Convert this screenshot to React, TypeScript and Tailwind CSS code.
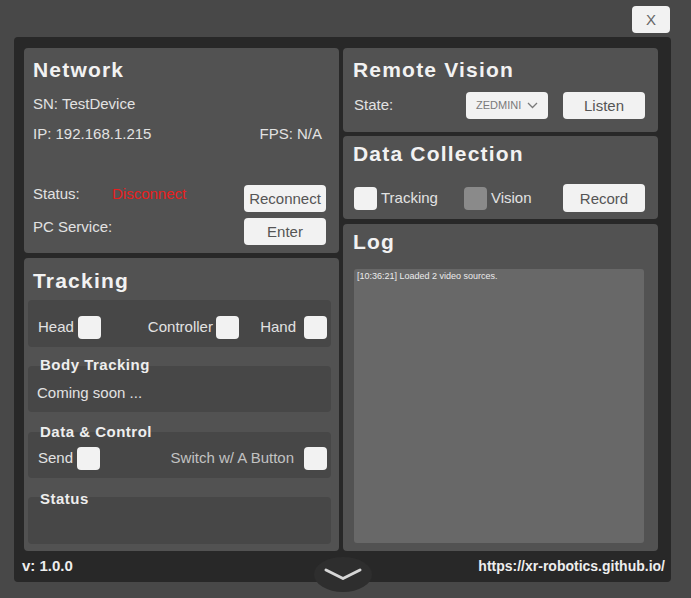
function Checkbox({ dim = false }: { dim?: boolean }) {
  return (
    <div
      className={
        "w-[23px] h-[23px] rounded-[4px] shrink-0 " +
        (dim ? "bg-[#8a8a8a]" : "bg-[#f2f2f2]")
      }
    />
  );
}

function Btn({ label, h = "h-[27px]" }: { label: string; h?: string }) {
  return (
    <button
      className={
        "w-[82px] rounded-[4px] bg-[#f2f2f2] text-[#555555] text-[15px] leading-none flex items-center justify-center shrink-0 " +
        h
      }
    >
      {label}
    </button>
  );
}

function Title({ text, cls = "" }: { text: string; cls?: string }) {
  return (
    <div
      className={
        "h-[28px] leading-[28px] text-[21px] font-bold tracking-[1.2px] text-[#f2f2f2] " +
        cls
      }
    >
      {text}
    </div>
  );
}

// section label that overlaps the top edge of the box below it
function SubLabel({ text, cls = "" }: { text: string; cls?: string }) {
  return (
    <div
      className={
        "relative z-[1] pl-[16px] leading-[16px] text-[15px] font-bold tracking-[0.5px] text-[#eeeeee] " +
        cls
      }
    >
      {text}
    </div>
  );
}

function NetworkPanel() {
  return (
    <div className="h-[205px] bg-[#525252] rounded-[4px] pl-[9px] pr-[13px] flex flex-col text-[15px] text-[#e2e2e2]">
      <Title text="Network" cls="mt-[8px]" />
      <div className="mt-[10px] leading-[20px]">SN: TestDevice</div>
      <div className="mt-[10px] leading-[20px] flex justify-between pr-[4px]">
        <span>IP: 192.168.1.215</span>
        <span>FPS: N/A</span>
      </div>
      <div className="mt-[41px] h-[27px] flex items-start">
        <span className="w-[79px] leading-[20px] -mt-[1px]">Status:</span>
        <span className="leading-[20px] -mt-[1px] text-[#e81e1e]">Disconnect</span>
        <div className="ml-auto">
          <Btn label="Reconnect" />
        </div>
      </div>
      <div className="mt-[6px] h-[27px] flex items-start">
        <span className="leading-[20px] -mt-[1px]">PC Service:</span>
        <div className="ml-auto">
          <Btn label="Enter" />
        </div>
      </div>
    </div>
  );
}

function TrackingPanel() {
  return (
    <div className="h-[293px] bg-[#525252] rounded-[4px] flex flex-col text-[15px] text-[#e2e2e2]">
      <Title text="Tracking" cls="mt-[9px] pl-[9px]" />
      <div className="mt-[5px] ml-[4px] mr-[8px] h-[47px] bg-[#474747] rounded-[4px] pt-[16px] pl-[10px] pr-[4px]">
        <div className="h-[23px] flex items-center">
          <span>Head</span>
          <div className="ml-[4px]">
            <Checkbox />
          </div>
          <span className="ml-[47px]">Controller</span>
          <div className="ml-[3px]">
            <Checkbox />
          </div>
          <span className="ml-auto">Hand</span>
          <div className="ml-[8px]">
            <Checkbox />
          </div>
        </div>
      </div>

      <SubLabel text="Body Tracking" cls="mt-[10px]" />
      <div className="-mt-[7px] ml-[4px] mr-[8px] h-[46px] bg-[#474747] rounded-[4px] pt-[17px] pl-[9px]">
        <div className="leading-[20px]">Coming soon ...</div>
      </div>

      <SubLabel text="Data & Control" cls="mt-[12px]" />
      <div className="-mt-[8px] ml-[4px] mr-[8px] h-[46px] bg-[#474747] rounded-[4px] pt-[15px] pl-[10px] pr-[4px]">
        <div className="h-[23px] flex items-center">
          <span>Send</span>
          <div className="ml-[4px]">
            <Checkbox />
          </div>
          <span className="ml-auto text-[#c2c2c2]">Switch w/ A Button</span>
          <div className="ml-[10px]">
            <Checkbox />
          </div>
        </div>
      </div>

      <SubLabel text="Status" cls="mt-[13px]" />
      <div className="-mt-[10px] ml-[4px] mr-[8px] h-[47px] bg-[#474747] rounded-[4px]" />
    </div>
  );
}

function RemoteVisionPanel() {
  return (
    <div className="h-[84px] bg-[#525252] rounded-[4px] pl-[10px] pr-[13px] flex flex-col text-[15px] text-[#e2e2e2]">
      <Title text="Remote Vision" cls="mt-[8px]" />
      <div className="mt-[8px] h-[27px] flex items-center">
        <span className="w-[113px] pl-[1px]">State:</span>
        <div className="w-[82px] h-[27px] rounded-[4px] bg-[#f2f2f2] flex items-center pl-[10px] gap-[6px]">
          <span className="text-[11px] text-[#7a7a7a] leading-none">ZEDMINI</span>
          <svg width="11" height="7" viewBox="0 0 11 7" fill="none">
            <polyline points="1,1 5.5,5.5 10,1" stroke="#7a7a7a" strokeWidth="1.3" />
          </svg>
        </div>
        <div className="ml-auto">
          <Btn label="Listen" />
        </div>
      </div>
    </div>
  );
}

function DataCollectionPanel() {
  return (
    <div className="h-[83px] bg-[#525252] rounded-[4px] pl-[10px] pr-[13px] flex flex-col text-[15px] text-[#e2e2e2]">
      <Title text="Data Collection" cls="mt-[4px]" />
      <div className="mt-[16px] h-[28px] flex items-center pl-[1px]">
        <Checkbox />
        <span className="ml-[4px]">Tracking</span>
        <div className="ml-[26px]">
          <Checkbox dim />
        </div>
        <span className="ml-[4px]">Vision</span>
        <div className="ml-auto">
          <Btn label="Record" h="h-[28px]" />
        </div>
      </div>
    </div>
  );
}

function LogPanel() {
  return (
    <div className="h-[327px] bg-[#525252] rounded-[4px] flex flex-col">
      <Title text="Log" cls="mt-[4px] pl-[10px]" />
      <div className="mt-[13px] ml-[11px] mr-[14px] h-[274px] bg-[#686868] rounded-[3px] pl-[3px] pt-[1px]">
        <div className="text-[9px] leading-[12px] text-[#ececec]">
          [10:36:21] Loaded 2 video sources.
        </div>
      </div>
    </div>
  );
}

export default function App() {
  return (
    <div className="w-[691px] h-[598px] bg-[#484848] relative overflow-hidden font-['Liberation_Sans',Arial,sans-serif]">
      <div className="h-[37px] flex justify-end items-start pt-[6px] pr-[21px]">
        <button className="w-[38px] h-[27px] rounded-[4px] bg-[#f2f2f2] text-[#666666] text-[15px] leading-none flex items-center justify-center">
          X
        </button>
      </div>

      <div className="ml-[14px] w-[657px] h-[545px] bg-[#282828] rounded-[4px] flex flex-col">
        <div className="pt-[11px] pl-[10px] flex gap-[4px]">
          <div className="w-[315px] flex flex-col gap-[5px]">
            <NetworkPanel />
            <TrackingPanel />
          </div>
          <div className="w-[315px] flex flex-col">
            <RemoteVisionPanel />
            <div className="mt-[4px]">
              <DataCollectionPanel />
            </div>
            <div className="mt-[5px]">
              <LogPanel />
            </div>
          </div>
        </div>
        <div className="h-[31px] flex items-center justify-between pl-[8px] pr-[6px] text-[15px] font-semibold text-[#eeeeee]">
          <span>v: 1.0.0</span>
          <span className="text-[14px] font-bold">https://xr-robotics.github.io/</span>
        </div>
      </div>

      <div className="absolute left-[314px] top-[557px] w-[58px] h-[35px] rounded-[50%] bg-[#2e2e2e]">
        <svg width="58" height="35" viewBox="0 0 58 35" fill="none">
          <polyline
            points="12,13 29,21.5 46,13"
            stroke="#d6d6d6"
            strokeWidth="3"
            strokeLinecap="round"
            strokeLinejoin="round"
          />
        </svg>
      </div>
    </div>
  );
}
